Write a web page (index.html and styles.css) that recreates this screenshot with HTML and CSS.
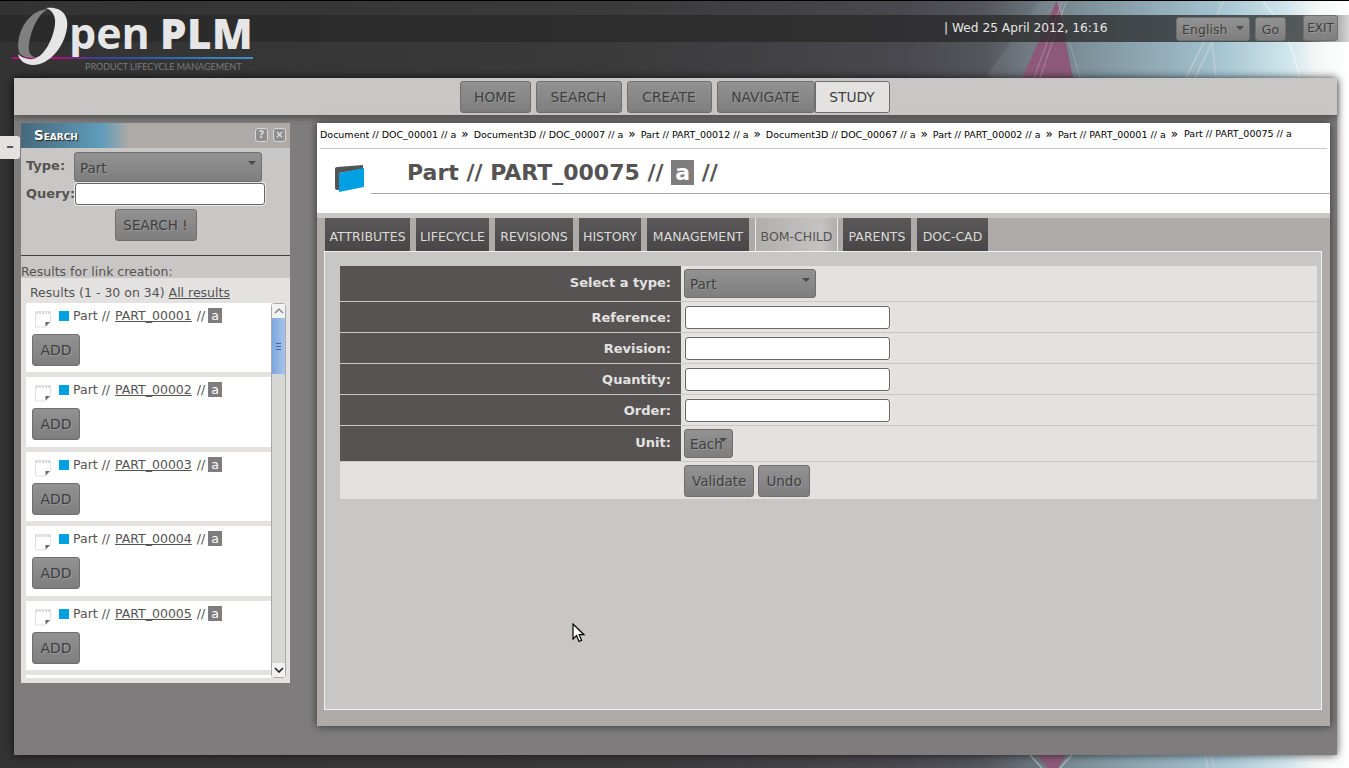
FILE: index.html
```html
<!DOCTYPE html>
<html lang="en">
<head>
    <meta charset="UTF-8">
    <title>OpenPLM - Part // PART_00075 // a</title>
    <link rel="stylesheet" href="styles.css">
</head>
<body>
    <svg class="backdrop" width="1349" height="768" viewBox="0 0 1349 768">
        <defs>
            <linearGradient id="sky" x1="0" y1="0" x2="1" y2="0">
                <stop offset="0" stop-color="#333333"/>
                <stop offset="0.45" stop-color="#3a3a3a"/>
                <stop offset="0.67" stop-color="#48484e"/>
                <stop offset="0.73" stop-color="#55565c"/>
                <stop offset="0.8" stop-color="#7b8f98"/>
                <stop offset="0.9" stop-color="#a2c1cf"/>
                <stop offset="0.955" stop-color="#d0e6ec"/>
                <stop offset="0.975" stop-color="#f4f6f6"/>
                <stop offset="1" stop-color="#ffffff"/>
            </linearGradient>
        </defs>
        <rect width="1349" height="768" fill="url(#sky)"/>
        <polygon points="985,78 1030,78 1070,0 1040,0" fill="#ffffff" opacity="0.07"/>
        <polygon points="1022,78 1073,78 1058,2 1056,2" fill="#8c5a78"/>
        <path d="M1034 78 L1062 2 M1040 78 L1066 2 M1080 78 L1058 2" stroke="#c8b8c0" stroke-width="1" fill="none" opacity="0.45"/>
        <path d="M1186 78 L1210 30 L1224 0 M1195 78 L1212 42 L1216 78" stroke="#d8d8d8" stroke-width="1.5" fill="none" opacity="0.55"/>
        <path d="M1300 78 Q1290 30 1262 0" stroke="#ffffff" stroke-width="1" fill="none" opacity="0.7"/>
        <polygon points="1037,755 1066,755 1058,768 1048,768" fill="#8c5a78"/>
        <path d="M1030 755 L1042 768 M1072 755 L1060 768 M1205 755 L1208 768 M1211 755 L1214 768" stroke="#d0d0d0" stroke-width="1.5" fill="none" opacity="0.6"/>
        <rect y="0" width="1349" height="1" fill="#000000"/>
    </svg>

    <header class="topbar">
        <div class="infobar">
            <span class="date">| Wed 25 April 2012, 16:16</span>
            <span class="btn lang">English<i class="caret"></i></span>
            <span class="btn go">Go</span>
            <span class="btn exit">EXIT</span>
        </div>
        <a class="logo" href="#">
            <i class="logo-rule"></i>
            <svg class="logo-ring" width="57" height="62" viewBox="0 0 57 62">
                <path d="M7 46 C3 28 16 4 36 3 C26 8 19 24 17 38 C16 46 18 50 24 52 C16 52 9 51 7 46Z" fill="#808080"/>
                <path d="M34 2 C50 0 57 10 55 22 C52 42 36 60 20 59 C12 58 7 54 6 48 C10 52 18 55 24 52 C34 48 42 30 43 18 C44 10 40 4 34 2Z" fill="#e6e6e6"/>
            </svg>
            <span class="logo-text">
                <span class="logo-name"><span class="logo-pen">pen</span> <b>PLM</b></span>
                <span class="logo-tag">PRODUCT LIFECYCLE MANAGEMENT</span>
            </span>
        </a>
    </header>

    <div class="page">
        <nav class="mainnav">
            <a class="btn navbtn" href="#">HOME</a>
            <a class="btn navbtn" href="#">SEARCH</a>
            <a class="btn navbtn" href="#">CREATE</a>
            <a class="btn navbtn" href="#">NAVIGATE</a>
            <a class="btn navbtn current" href="#">STUDY</a>
        </nav>

        <div class="columns">
            <span class="toggle">–</span>
            <aside class="search">
                <div class="search-title">
                    <span>Search</span>
                    <i class="winbtn">?</i>
                    <i class="winbtn">×</i>
                </div>
                <form class="search-form">
                    <div class="search-row type-row">
                        <label>Type:</label>
                        <span class="btn select search-select">Part<i class="caret"></i></span>
                    </div>
                    <div class="search-row query-row">
                        <label>Query:</label>
                        <input class="text-input query" type="text">
                    </div>
                    <div class="search-submit"><span class="btn">SEARCH !</span></div>
                </form>
                <div class="results-label">Results for link creation:</div>
                <div class="results">
                    <div class="results-count">Results (1 - 30 on 34) <a href="#">All results</a></div>
                    <div class="results-scroll">
                        <ul class="result-list">
                            <li class="result">
                                <div class="result-line"><svg class="note" width="18" height="18" viewBox="0 0 18 18"><use href="#note-icon"/></svg><i class="blue"></i>Part // <a href="#">PART_00001</a> // <span class="rev">a</span></div>
                                <span class="btn add">ADD</span>
                            </li>
                            <li class="result">
                                <div class="result-line"><svg class="note" width="18" height="18" viewBox="0 0 18 18"><use href="#note-icon"/></svg><i class="blue"></i>Part // <a href="#">PART_00002</a> // <span class="rev">a</span></div>
                                <span class="btn add">ADD</span>
                            </li>
                            <li class="result">
                                <div class="result-line"><svg class="note" width="18" height="18" viewBox="0 0 18 18"><use href="#note-icon"/></svg><i class="blue"></i>Part // <a href="#">PART_00003</a> // <span class="rev">a</span></div>
                                <span class="btn add">ADD</span>
                            </li>
                            <li class="result">
                                <div class="result-line"><svg class="note" width="18" height="18" viewBox="0 0 18 18"><use href="#note-icon"/></svg><i class="blue"></i>Part // <a href="#">PART_00004</a> // <span class="rev">a</span></div>
                                <span class="btn add">ADD</span>
                            </li>
                            <li class="result">
                                <div class="result-line"><svg class="note" width="18" height="18" viewBox="0 0 18 18"><use href="#note-icon"/></svg><i class="blue"></i>Part // <a href="#">PART_00005</a> // <span class="rev">a</span></div>
                                <span class="btn add">ADD</span>
                            </li>
                            <li class="result cut"></li>
                        </ul>
                        <div class="scrollbar">
                            <span class="sb-arrow up"><svg width="10" height="6" viewBox="0 0 10 6"><path d="M1 5 L5 1 L9 5" fill="none" stroke="#777" stroke-width="1.2"/></svg></span>
                            <span class="sb-thumb"><i></i><i></i><i></i></span>
                            <span class="sb-track"></span>
                            <span class="sb-arrow down"><svg width="10" height="6" viewBox="0 0 10 6"><path d="M1 1 L5 5 L9 1" fill="none" stroke="#222" stroke-width="1.6"/></svg></span>
                        </div>
                    </div>
                </div>
            </aside>

            <main class="content">
                <div class="crumbs">
                    <span>Document // DOC_00001 // a</span><b>»</b>
                    <span>Document3D // DOC_00007 // a</span><b>»</b>
                    <span>Part // PART_00012 // a</span><b>»</b>
                    <span>Document3D // DOC_00067 // a</span><b>»</b>
                    <span>Part // PART_00002 // a</span><b>»</b>
                    <span>Part // PART_00001 // a</span><b>»</b>
                    <span class="crumb-last">Part // PART_00075 // a</span>
                </div>
                <div class="title-block">
                    <svg class="part-icon" width="30" height="29" viewBox="0 0 30 29">
                        <path d="M0 5 Q0 3 2 3 L28 1 L28 5 L4 9 L4 26 L2 26 Q0 26 0 24Z" fill="#555353"/>
                        <path d="M4 9 L29 4 L29 23 L4 28Z" fill="#00a0e3"/>
                    </svg>
                    <h1>Part // PART_00075 // <span class="rev">a</span> //</h1>
                </div>
                <div class="tabs-area">
                    <div class="tabs">
                        <a class="tab" href="#">ATTRIBUTES</a>
                        <a class="tab" href="#">LIFECYCLE</a>
                        <a class="tab" href="#">REVISIONS</a>
                        <a class="tab" href="#">HISTORY</a>
                        <a class="tab" href="#">MANAGEMENT</a>
                        <a class="tab active" href="#">BOM-CHILD</a>
                        <a class="tab" href="#">PARENTS</a>
                        <a class="tab" href="#">DOC-CAD</a>
                    </div>
                    <div class="tab-panel">
                        <form class="bom-form">
                            <div class="form-row tall">
                                <label>Select a type:</label>
                                <div class="field"><span class="btn select type-select">Part<i class="caret"></i></span></div>
                            </div>
                            <div class="form-row">
                                <label>Reference:</label>
                                <div class="field"><input class="text-input" type="text"></div>
                            </div>
                            <div class="form-row">
                                <label>Revision:</label>
                                <div class="field"><input class="text-input" type="text"></div>
                            </div>
                            <div class="form-row">
                                <label>Quantity:</label>
                                <div class="field"><input class="text-input" type="text"></div>
                            </div>
                            <div class="form-row">
                                <label>Order:</label>
                                <div class="field"><input class="text-input" type="text"></div>
                            </div>
                            <div class="form-row tall">
                                <label>Unit:</label>
                                <div class="field"><span class="btn select unit-select">Each<i class="caret"></i></span></div>
                            </div>
                            <div class="form-row actions">
                                <div class="blank"></div>
                                <div class="field">
                                    <span class="btn">Validate</span>
                                    <span class="btn">Undo</span>
                                </div>
                            </div>
                        </form>
                    </div>
                </div>
            </main>
        </div>
    </div>

    <svg class="cursor" width="14" height="20" viewBox="0 0 14 20">
        <path d="M1 1 L1 16 L4.6 12.6 L7 18.5 L9.6 17.4 L7.2 11.7 L12 11.7Z" fill="#fff" stroke="#000" stroke-width="1.2"/>
    </svg>

    <svg width="0" height="0" class="sprites">
        <symbol id="note-icon" viewBox="0 0 18 18">
            <path d="M1.5 1.5 H16.5 V12 L11.5 17 H1.5Z" fill="#fff" stroke="#e0e0e0" stroke-width="1"/>
            <path d="M2 3 H16" stroke="#d8d8d8" stroke-width="2" stroke-dasharray="2 1"/>
            <path d="M11.5 16.5 V12 H16Z" fill="#666"/>
        </symbol>
    </svg>
</body>
</html>
```

FILE: styles.css
```css
* {
    box-sizing: border-box;
}
html, body {
    height: 768px;
    overflow: hidden;
}
body {
    margin: 0;
    position: relative;
    font-family: "DejaVu Sans", sans-serif;
    font-size: 13px;
    color: #555353;
}
a {
    color: inherit;
}
.backdrop {
    position: absolute;
    left: 0;
    top: 0;
    z-index: -1;
}
.sprites {
    position: absolute;
}
.cursor {
    position: absolute;
    left: 572px;
    top: 623px;
}

/* header */
.topbar {
    height: 78px;
    position: relative;
}
.logo {
    position: absolute;
    left: 12px;
    top: 6px;
    display: flex;
    text-decoration: none;
    color: #e6e6e6;
}
.logo-rule {
    position: absolute;
    left: 0;
    top: 51px;
    width: 241px;
    height: 2px;
    background: linear-gradient(90deg, #b0107a 0, #b0107a 20%, #3a3f9a 35%, #2a62ac 60%, #3f90c8 100%);
}
.logo-ring {
    position: relative;
    flex: none;
}
.logo-text {
    display: flex;
    flex-direction: column;
}
.logo-name {
    font-family: "Open Sans", sans-serif;
    font-size: 43px;
    line-height: 44px;
    margin-top: 5px;
    white-space: nowrap;
}
.logo-pen {
    font-weight: 700;
}
.logo-name b {
    font-size: 42px;
    font-weight: 800;
    margin-left: -1px;
    letter-spacing: 0.5px;
}
.logo-tag {
    font-family: "Lato", sans-serif;
    font-size: 9px;
    line-height: 11px;
    color: #7a7a7a;
    margin: 6px 0 0 16px;
    white-space: nowrap;
}
.infobar {
    position: absolute;
    left: 0;
    right: 0;
    top: 15px;
    height: 27px;
    background: linear-gradient(90deg, rgba(40, 40, 40, 0.75) 97%, rgba(40, 40, 40, 0.2) 100%);
    color: #e6e6e6;
}
.date {
    position: absolute;
    left: 944px;
    top: 6px;
    font-size: 12.2px;
}
.infobar .btn {
    position: absolute;
    top: 2px;
    height: 24px;
    font-size: 12.6px;
}
.infobar .lang {
    left: 1176px;
    width: 74px;
    padding-left: 5px;
    justify-content: flex-start;
}
.infobar .go {
    left: 1255px;
    width: 31px;
}
.infobar .exit {
    left: 1303px;
    top: 0;
    width: 35px;
    height: 26px;
    font-size: 12px;
}

/* shared button look */
.btn {
    display: inline-flex;
    align-items: center;
    justify-content: center;
    position: relative;
    height: 32px;
    padding: 0 7px;
    border: 1px solid #6f6f6f;
    border-radius: 3px;
    background: linear-gradient(#929292, #7e7e7e);
    color: #3f3f3f;
    font-size: 13.5px;
    text-shadow: 1px 1px 0 rgba(255, 255, 255, 0.18);
    text-decoration: none;
    white-space: nowrap;
}
.caret {
    position: absolute;
    right: 5px;
    top: 8px;
    width: 0;
    height: 0;
    border-left: 4px solid transparent;
    border-right: 4px solid transparent;
    border-top: 4px solid #4a4a4a;
}
.select {
    justify-content: flex-start;
    padding-left: 5px;
}
.text-input {
    height: 24px;
    background: #fff;
    border: 1px solid #666;
    border-radius: 3px;
    box-shadow: 0 0 0 1px #e8e8e8;
    padding: 0;
}

/* main container */
.page {
    position: relative;
    margin-left: 14px;
    width: 1323px;
    height: 677px;
    background: #7e7c7c;
    box-shadow: 0 0 8px rgba(0, 0, 0, 0.7);
    border-radius: 0 3px 0 0;
}
.mainnav {
    height: 37px;
    background: #c8c7c5;
    display: flex;
    justify-content: center;
    gap: 5px;
    padding: 3px 2px 0 0;
    box-shadow: 0 3px 6px rgba(0, 0, 0, 0.35);
}
.navbtn {
    height: 32px;
    padding: 0;
    font-size: 13.8px;
}
.navbtn:nth-child(1) {
    width: 71px;
}
.navbtn:nth-child(2) {
    width: 86px;
}
.navbtn:nth-child(3) {
    width: 85px;
}
.navbtn:nth-child(4) {
    width: 98px;
}
.navbtn.current {
    width: 75px;
    background: #e3e2e0;
    margin-left: -5px;
    border-radius: 0 3px 3px 0;
}
.columns {
    display: flex;
    align-items: flex-start;
    padding: 8px 7px 0;
    position: relative;
}
.toggle {
    position: absolute;
    left: -14px;
    top: 21px;
    width: 20px;
    height: 23px;
    background: #e3e2e0;
    border-radius: 0 3px 3px 0;
    text-align: center;
    font-weight: bold;
    font-size: 15px;
    line-height: 21px;
    color: #555;
}

/* search panel */
.search {
    width: 269px;
    height: 560px;
    background: #c8c7c5;
    flex: none;
}
.search-title {
    height: 25px;
    background: linear-gradient(90deg, #46697c 0, #5f9cbb 30%, #adaaa8 40%, #adaaa8 100%);
    display: flex;
    align-items: center;
    gap: 5px;
    padding: 0 4px 2px 13px;
}
.search-title span {
    font-size: 13.5px;
    font-weight: bold;
    font-variant: small-caps;
    color: #fff;
    text-shadow: 1px 1px 1px #222;
    margin-right: auto;
}
.winbtn {
    width: 13px;
    height: 14px;
    border: 1px solid #d8d8d8;
    border-radius: 3px;
    background: #8f8d8d;
    color: #ddd;
    font-style: normal;
    font-weight: bold;
    font-size: 10px;
    line-height: 12px;
    text-align: center;
}
.search-form {
    height: 108px;
    border-bottom: 1px solid #3f3f3f;
    padding-top: 4px;
}
.search-row {
    display: flex;
    align-items: center;
}
.search-row label {
    font-weight: bold;
    color: #555353;
    margin-left: 5px;
    width: 48px;
    font-size: 13px;
}
.type-row {
    height: 30px;
}
.type-row label {
    margin-top: -4px;
}
.search-select {
    width: 188px;
    height: 30px;
    padding-top: 2px;
}
.query-row {
    margin-top: 1px;
}
.query-row label {
    margin-top: -1px;
}
.search-row .query {
    width: 190px;
    height: 22px;
    margin-left: 1px;
}
.search-submit {
    text-align: center;
    margin-top: 4px;
}
.search-submit .btn {
    width: 82px;
}
.results-label {
    height: 22px;
    line-height: 31px;
    font-size: 12.5px;
}
.results {
    background: #e3e2e0;
    height: 405px;
    padding-left: 5px;
}
.results-count {
    height: 25px;
    line-height: 29px;
    padding-left: 4px;
    font-size: 12.5px;
}
.results-scroll {
    position: relative;
    height: 375px;
    overflow: hidden;
}
.result-list {
    list-style: none;
    margin: 0;
    padding: 0;
    width: 245px;
}
.result {
    height: 69.4px;
    background: #fff;
    margin-bottom: 5px;
    padding: 5px 0 0 6px;
}
.result-line {
    height: 26px;
    display: flex;
    align-items: flex-start;
    font-size: 12.5px;
    white-space: pre;
}
.result-line a {
    margin: 0 1px;
}
.note {
    margin: 2px 6px 0 2px;
    flex: none;
}
.blue {
    width: 10px;
    height: 10px;
    background: #00a0e3;
    margin: 3px 4px 0 1px;
    flex: none;
}
.rev {
    background: #7e7c7c;
    color: #fff;
    padding: 0 3px;
}
.result-line .rev {
    margin-left: -1px;
}
.add {
    width: 48px;
    font-size: 14px;
    margin-top: 0;
}
.scrollbar {
    position: absolute;
    left: 245px;
    top: 0;
    width: 15px;
    height: 375px;
    display: flex;
    flex-direction: column;
    background: #d6d6d4;
    border: 1px solid #a9a9a9;
    border-radius: 4px;
}
.sb-arrow {
    height: 14px;
    display: flex;
    align-items: center;
    justify-content: center;
    background: #f2f2f2;
    flex: none;
}
.sb-thumb {
    height: 56px;
    background: linear-gradient(90deg, #7ea6dc, #a6c4ec);
    display: flex;
    flex-direction: column;
    justify-content: center;
    align-items: center;
    gap: 2px;
    flex: none;
}
.sb-thumb i {
    width: 5px;
    height: 1px;
    background: #3f67a0;
}
.sb-track {
    flex: 1;
}

/* content panel */
.content {
    width: 1013px;
    height: 603px;
    margin-left: 27px;
    background: #fff;
    box-shadow: 0 0 9px rgba(0, 0, 0, 0.6);
    display: flex;
    flex-direction: column;
    flex: none;
}
.crumbs {
    height: 26px;
    margin: 0 3px 0 3px;
    border-bottom: 1px solid #c8c7c5;
    font-size: 9.5px;
    color: #000;
    white-space: nowrap;
    display: flex;
    align-items: center;
    padding-bottom: 3px;
}
.crumbs b {
    font-weight: normal;
    font-size: 12px;
    margin: 0 5px;
}
.crumb-last {
    margin-top: -2px;
    margin-left: 1px;
}
.title-block {
    height: 64px;
    position: relative;
    padding-left: 54px;
}
.part-icon {
    position: absolute;
    left: 18px;
    top: 15px;
}
.title-block h1 {
    margin: 0;
    height: 45px;
    padding-left: 36px;
    border-bottom: 1px solid #aaa;
    font-size: 22px;
    line-height: 48px;
    color: #555353;
    font-weight: bold;
    white-space: pre;
}
.title-block h1 .rev {
    padding: 0 4px;
}
.tabs-area {
    flex: 1;
    background: #adaaa8;
    border-top: 5px solid #c8c7c5;
    padding: 0 8px 16px 7px;
    display: flex;
    flex-direction: column;
}
.tabs {
    height: 33px;
    display: flex;
    gap: 6px;
    padding-left: 1px;
}
.tab {
    height: 33px;
    background: linear-gradient(#5a5858, #484646);
    color: #dcdbd9;
    text-decoration: none;
    text-align: center;
    font-size: 12.5px;
    line-height: 37px;
    white-space: nowrap;
}
.tab:nth-child(1) {
    width: 85px;
}
.tab:nth-child(2) {
    width: 73px;
}
.tab:nth-child(3) {
    width: 78px;
}
.tab:nth-child(4) {
    width: 62px;
}
.tab:nth-child(5) {
    width: 102px;
}
.tab:nth-child(6) {
    width: 83px;
    margin-right: -1px;
}
.tab:nth-child(7) {
    width: 68px;
}
.tab:nth-child(8) {
    width: 71px;
}
.tab.active {
    background: linear-gradient(90deg, #b0afad, #c4c3c1 80%, #b0afad);
    border-left: 1px solid #e8e8e8;
    border-right: 1px solid #e8e8e8;
    color: #555353;
}
.tab-panel {
    flex: 1;
    background: #c8c7c5;
    border: 1px solid #f2f2f2;
    padding: 14px 4px 0 15px;
}
.form-row {
    display: flex;
    height: 31px;
    border-bottom: 1px solid #c8c7c5;
}
.form-row.tall {
    height: 36px;
}
.form-row label {
    width: 341px;
    flex: none;
    background: #575353;
    color: #e3e2e0;
    font-weight: bold;
    font-size: 13px;
    text-align: right;
    padding: 8px 10px 0 0;
}
.form-row.tall label {
    padding-top: 9px;
}
.field {
    flex: 1;
    background: #e3e2e0;
    padding: 3px 0 0 3px;
    display: flex;
    gap: 4px;
}
.field .text-input {
    width: 205px;
    height: 23px;
    margin: 1px 0 0 1px;
}
.field .btn {
    height: 29px;
}
.type-select {
    width: 132px;
}
.unit-select {
    width: 49px;
}
.unit-select .caret {
    right: 5px;
    top: 8px;
}
.form-row.actions {
    height: 38px;
}
.actions .blank {
    width: 341px;
    flex: none;
    background: #e3e2e0;
}
.actions .field .btn {
    height: 32px;
}
```
